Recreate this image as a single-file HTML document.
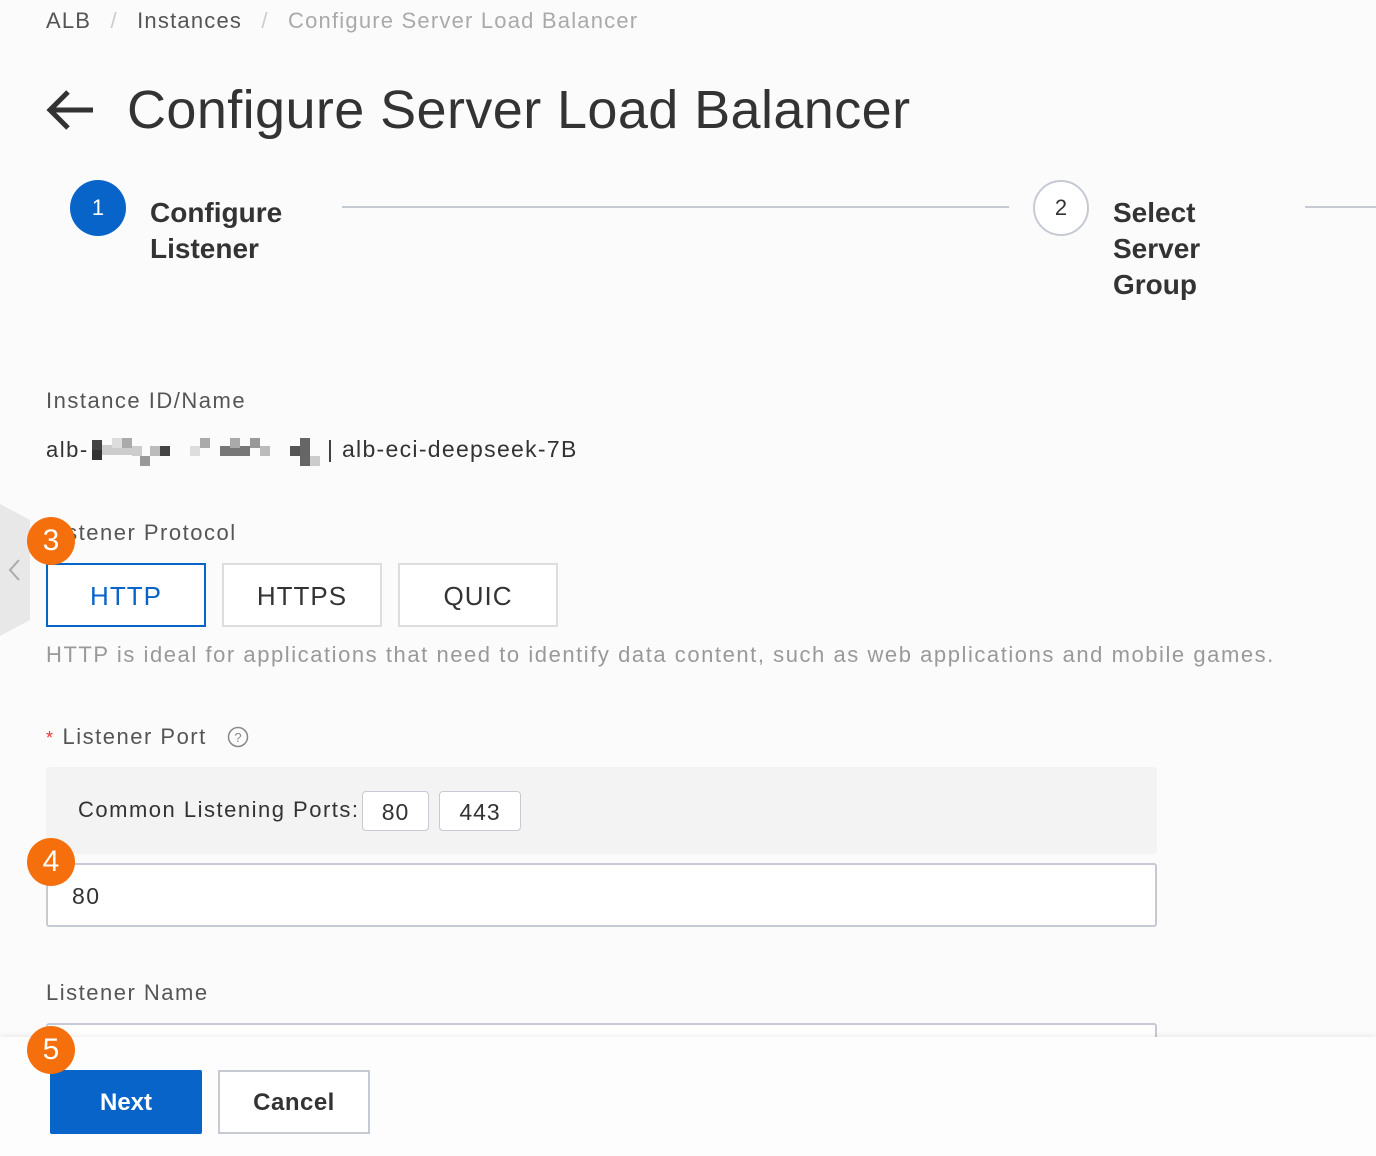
<!DOCTYPE html>
<html><head><meta charset="utf-8"><style>
*{margin:0;padding:0;box-sizing:border-box}
body{width:1376px;height:1156px;background:#fbfbfb;font-family:"Liberation Sans",sans-serif;color:#333;position:relative;overflow:hidden}
.a{position:absolute;white-space:nowrap}
.t{letter-spacing:1.5px}
.badge{position:absolute;width:48px;height:48px;border-radius:50%;background:#f56f0c;color:#fff;font-size:30px;text-align:center;line-height:48px;z-index:5}
.btn{position:absolute;border:2px solid #ddd;background:#fff;font-size:26px;text-align:center;color:#333;letter-spacing:1px}
.pix{position:absolute;height:10px;width:10px}
</style></head><body>
<div class="a t" style="left:46px;top:8px;font-size:22px;color:#555;letter-spacing:1.2px">ALB <span style="color:#ccc;margin:0 12px">/</span> Instances <span style="color:#ccc;margin:0 12px">/</span> <span style="color:#aaa">Configure Server Load Balancer</span></div>
<svg class="a" style="left:46px;top:88px" width="50" height="44" viewBox="0 0 50 44"><path d="M47 22H4M22 4L4 22L22 40" stroke="#333" stroke-width="5" fill="none"/></svg>
<div class="a" style="left:127px;top:79px;font-size:54px;color:#333;letter-spacing:0.4px">Configure Server Load Balancer</div>

<div class="a" style="left:70px;top:180px;width:56px;height:56px;border-radius:50%;background:#0864c8;color:#fff;font-size:22px;text-align:center;line-height:56px">1</div>
<div class="a" style="left:150px;top:195px;font-size:28px;font-weight:bold;line-height:36px;color:#333">Configure<br>Listener</div>
<div class="a" style="left:342px;top:206px;width:667px;height:2px;background:#c5cad3"></div>
<div class="a" style="left:1033px;top:180px;width:56px;height:56px;border-radius:50%;border:2px solid #c5cad3;background:#fff;font-size:22px;text-align:center;line-height:52px;color:#333">2</div>
<div class="a" style="left:1113px;top:195px;font-size:28px;font-weight:bold;line-height:36px;color:#333">Select<br>Server<br>Group</div>
<div class="a" style="left:1305px;top:206px;width:71px;height:2px;background:#c5cad3"></div>

<div class="a t" style="left:46px;top:388px;font-size:22px;color:#555">Instance ID/Name</div>
<div class="a t" style="left:46px;top:437px;font-size:22px;color:#333">alb-</div>
<div class="pix" style="left:92px;top:440px;background:#444;height:10px"></div>
<div class="pix" style="left:92px;top:450px;background:#333"></div>
<div class="pix" style="left:102px;top:445px;background:#ccc;width:30px"></div>
<div class="pix" style="left:112px;top:438px;background:#ddd"></div>
<div class="pix" style="left:122px;top:438px;background:#aaa"></div>
<div class="pix" style="left:132px;top:446px;background:#ccc"></div>
<div class="pix" style="left:140px;top:456px;background:#999"></div>
<div class="pix" style="left:150px;top:446px;background:#bbb"></div>
<div class="pix" style="left:160px;top:446px;background:#444"></div>
<div class="pix" style="left:190px;top:446px;background:#ddd"></div>
<div class="pix" style="left:200px;top:438px;background:#aaa"></div>
<div class="pix" style="left:220px;top:446px;background:#777;width:30px"></div>
<div class="pix" style="left:230px;top:438px;background:#aaa"></div>
<div class="pix" style="left:250px;top:438px;background:#999"></div>
<div class="pix" style="left:260px;top:446px;background:#bbb"></div>
<div class="pix" style="left:290px;top:446px;background:#555;width:20px"></div>
<div class="pix" style="left:300px;top:438px;background:#666;height:28px"></div>
<div class="pix" style="left:310px;top:456px;background:#ccc"></div>
<div class="a" style="left:327px;top:436px;font-size:23px;color:#333;letter-spacing:1.3px">| alb-eci-deepseek-7B</div>

<svg class="a" style="left:0;top:504px" width="32" height="132"><polygon points="0,0 30,16 30,116 0,132" fill="#e8e8e8"/><path d="M19 56L10 66L19 76" stroke="#aaa" stroke-width="2" fill="none"/></svg>
<div class="a t" style="left:46px;top:520px;font-size:22px;color:#555">Listener Protocol</div>
<div class="badge" style="left:27px;top:517px">3</div>
<div class="btn" style="left:46px;top:563px;width:160px;height:64px;line-height:62px;border-color:#0864c8;color:#0864c8">HTTP</div>
<div class="btn" style="left:222px;top:563px;width:160px;height:64px;line-height:62px">HTTPS</div>
<div class="btn" style="left:398px;top:563px;width:160px;height:64px;line-height:62px">QUIC</div>
<div class="a" style="left:46px;top:642px;font-size:22px;color:#999;letter-spacing:1.55px">HTTP is ideal for applications that need to identify data content, such as web applications and mobile games.</div>

<div class="a t" style="left:46px;top:724px;font-size:22px;color:#555"><span style="color:#e33;font-size:18px;margin-right:8px">*</span>Listener Port</div>
<svg class="a" style="left:227px;top:726px" width="22" height="22"><circle cx="11" cy="11" r="9.5" stroke="#888" stroke-width="1.5" fill="none"/><text x="11" y="16" font-size="13" text-anchor="middle" fill="#888" font-family="Liberation Sans">?</text></svg>
<div class="a" style="left:46px;top:767px;width:1111px;height:87px;background:#f3f3f3;border-radius:3px"></div>
<div class="a t" style="left:78px;top:797px;font-size:22px;color:#333">Common Listening Ports:</div>
<div class="a" style="left:362px;top:791px;width:67px;height:40px;border:1.5px solid #c5cad3;border-radius:4px;background:#fff;font-size:23px;text-align:center;line-height:40px;letter-spacing:1px">80</div>
<div class="a" style="left:439px;top:791px;width:82px;height:40px;border:1.5px solid #c5cad3;border-radius:4px;background:#fff;font-size:23px;text-align:center;line-height:40px;letter-spacing:1px">443</div>
<div class="a" style="left:46px;top:863px;width:1111px;height:64px;border:2px solid #c5cad3;border-radius:3px;background:#fff"></div>
<div class="a t" style="left:72px;top:883px;font-size:23px;color:#333">80</div>
<div class="badge" style="left:27px;top:838px">4</div>

<div class="a t" style="left:46px;top:980px;font-size:22px;color:#555">Listener Name</div>
<div class="a" style="left:46px;top:1023px;width:1111px;height:40px;border:2px solid #c5cad3;border-radius:3px;background:#fff"></div>
<div class="a" style="left:0;top:1037px;width:1376px;height:119px;background:#fdfdfd;box-shadow:0 -2px 4px rgba(0,0,0,0.06)"></div>
<div class="badge" style="left:27px;top:1026px">5</div>
<div class="a" style="left:50px;top:1070px;width:152px;height:64px;background:#0864c8;border-radius:2px;color:#fff;font-size:24px;font-weight:bold;text-align:center;line-height:66px">Next</div>
<div class="btn" style="left:218px;top:1070px;width:152px;height:64px;line-height:62px;font-size:24px;font-weight:bold;border-color:#c5cad3;letter-spacing:0.5px">Cancel</div>
</body></html>
